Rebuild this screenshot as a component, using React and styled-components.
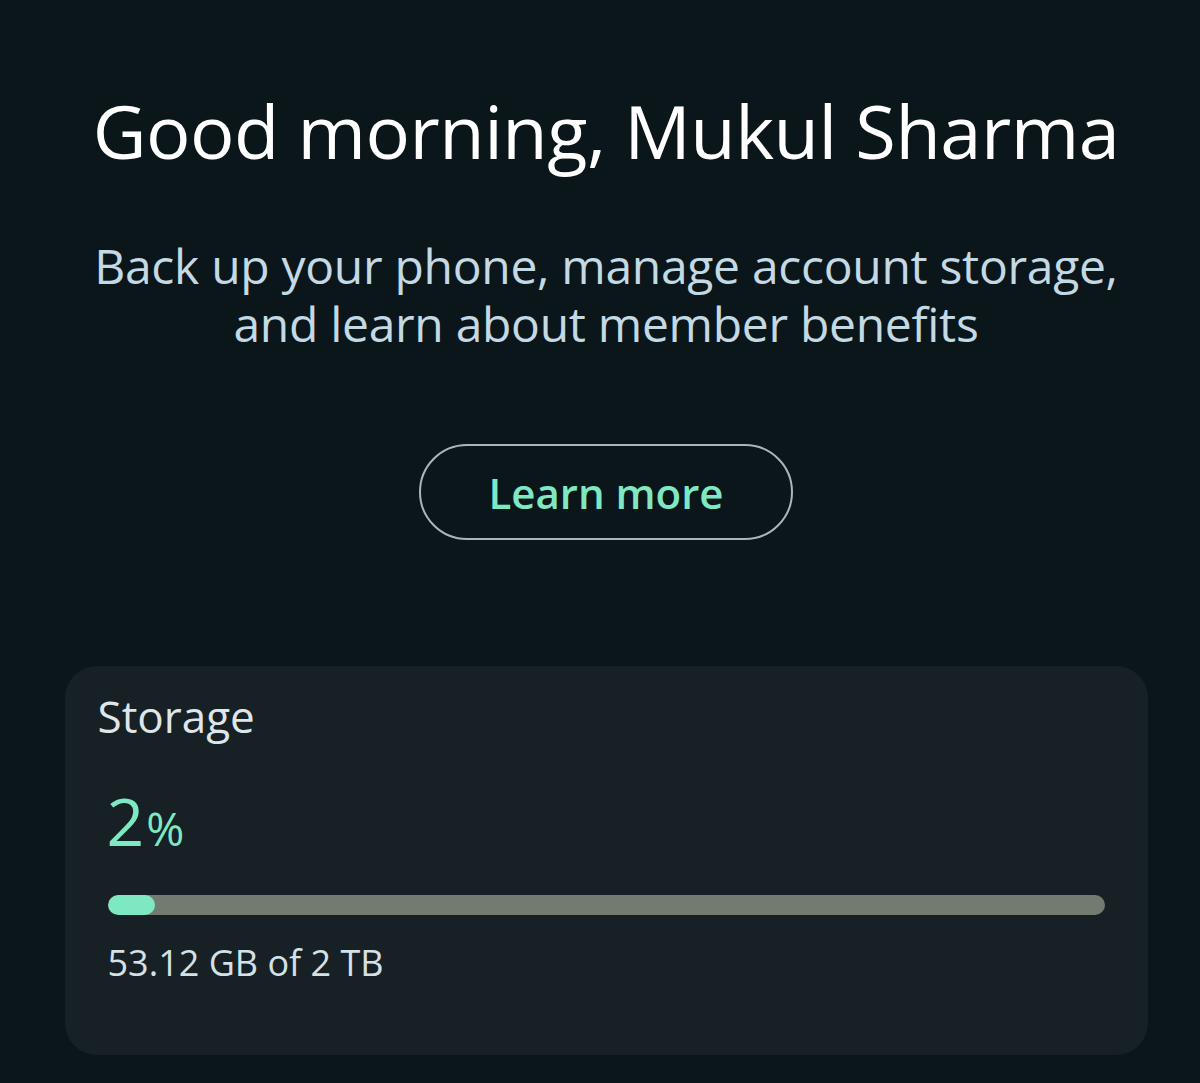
import styled, { createGlobalStyle } from 'styled-components'

const Global = createGlobalStyle`
  html, body {
    margin: 0;
    padding: 0;
    background: #0b161b;
  }
  body {
    font-family: "Open Sans", "Noto Sans", sans-serif;
  }
`

const Page = styled.div`
  width: 1200px;
  height: 1083px;
  overflow: hidden;
  background: #0b161b;
  display: flex;
  flex-direction: column;
  align-items: center;
  box-sizing: border-box;
  padding: 88px 0 0 12px;
`

const Title = styled.h1`
  margin: 0;
  font-size: 74px;
  font-weight: 400;
  color: #ffffff;
  line-height: 86px;
  letter-spacing: -0.5px;
  text-align: center;
  white-space: nowrap;
`

const Subtitle = styled.p`
  margin: 63px 0 0;
  font-size: 48px;
  line-height: 58px;
  font-weight: 400;
  color: #c3d9e4;
  text-align: center;
  letter-spacing: -0.3px;
  white-space: nowrap;
`

const OutlineButton = styled.button`
  margin-top: 91px;
  width: 374px;
  height: 96px;
  border-radius: 48px;
  border: 2px solid #a9b6bd;
  background: transparent;
  color: #7ee8c2;
  font-family: "Open Sans", sans-serif;
  font-size: 42px;
  font-weight: 600;
  cursor: pointer;
`

const Card = styled.section`
  margin-top: 126px;
  width: 1083px;
  height: 389px;
  flex-shrink: 0;
  box-sizing: border-box;
  background: #162025;
  border-radius: 32px;
  padding: 24px 43px 0 33px;
`

const CardTitle = styled.h2`
  margin: 0;
  font-size: 44px;
  font-weight: 500;
  color: #dfe5e8;
  line-height: 52px;
`

const Percent = styled.div`
  margin: 43px 0 0 9px;
  color: #7ee8c2;
  font-size: 66px;
  line-height: 70px;
  font-weight: 400;
  span {
    font-size: 46px;
    margin-left: 2px;
  }
`

const Track = styled.div`
  margin: 32px 0 0 10px;
  height: 20px;
  border-radius: 10px;
  background: #737a6e;
  overflow: hidden;
`

const Fill = styled.div`
  height: 100%;
  border-radius: 10px;
  background: #7ee8c2;
`

const Usage = styled.div`
  margin: 26px 0 0 10px;
  font-size: 36px;
  color: #d4e1e7;
  line-height: 44px;
`

export default function App() {
  const used = 53.12
  const total = 2048
  const pct = Math.max(1, Math.floor((used / total) * 100))
  return (
    <Page>
      <Global />
      <Title>Good morning, Mukul Sharma</Title>
      <Subtitle>
        Back up your phone, manage account storage,
        <br />
        and learn about member benefits
      </Subtitle>
      <OutlineButton>Learn more</OutlineButton>
      <Card>
        <CardTitle>Storage</CardTitle>
        <Percent>
          {pct}
          <span>%</span>
        </Percent>
        <Track>
          <Fill style={{ width: '47px' }} />
        </Track>
        <Usage>53.12 GB of 2 TB</Usage>
      </Card>
    </Page>
  )
}
